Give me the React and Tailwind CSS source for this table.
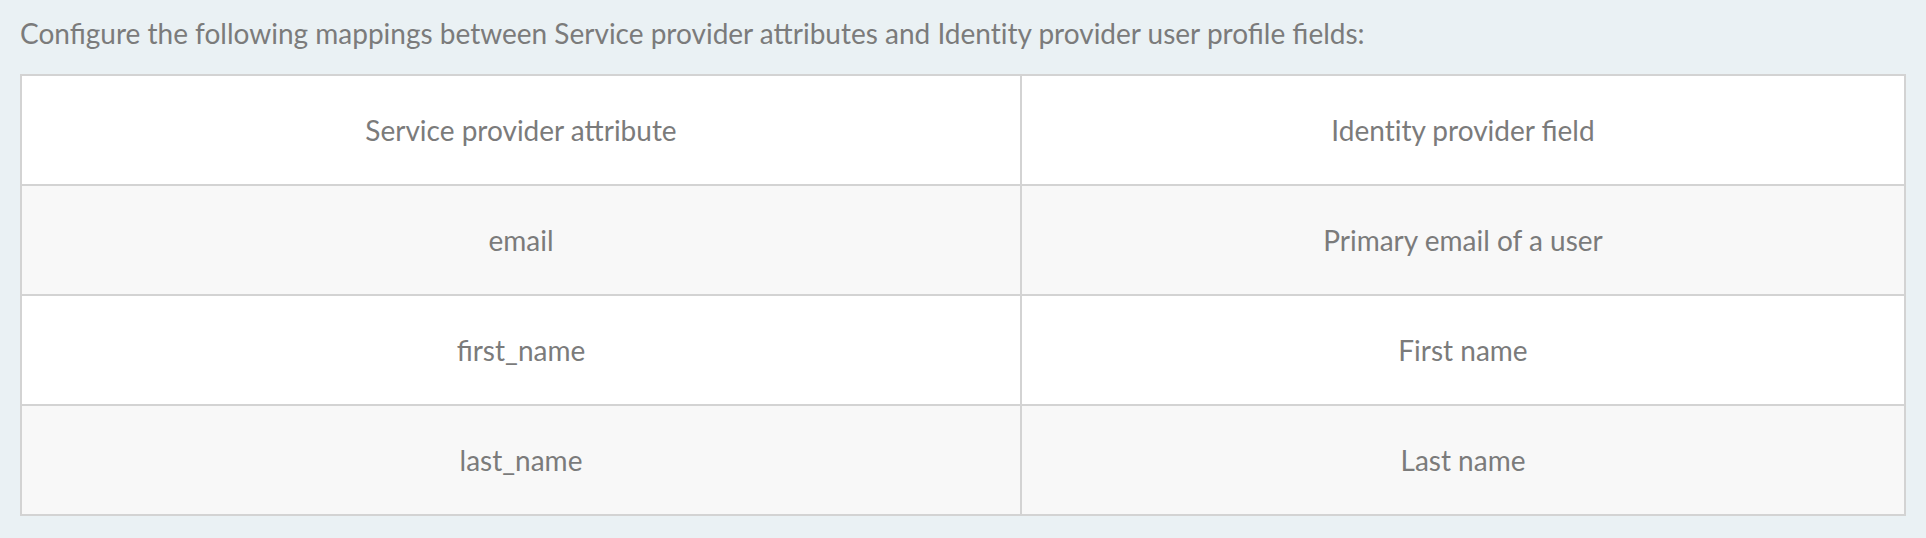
const ROWS = [
    { attr: 'email', field: 'Primary email of a user' },
    { attr: 'first_name', field: 'First name' },
    { attr: 'last_name', field: 'Last name' },
]

// zero-width non-joiner keeps Lato from joining "ti"
const IDENTITY = 'Ident\u200City'

export default function App() {
    return (
        <div className="w-[1926px] h-[538px] bg-[#eaf1f4] px-[20px] pt-[14px] font-['Lato','Open_Sans',sans-serif] text-[#7b7b7b]">
            <p className="text-[28px] leading-[38px] h-[60px]">
                Configure the following mappings between Service provider attributes and {IDENTITY} provider user profile fields:
            </p>

            {/* mapping table */}
            <div className="w-[1886px] border-2 border-[#d3d3d3] text-[28px]">
                <div className="grid grid-cols-[1000px_1fr] h-[110px] bg-white border-b-2 border-[#d3d3d3]">
                    <div className="flex items-center justify-center border-r-2 border-[#d3d3d3]">Service provider attribute</div>
                    <div className="flex items-center justify-center">{IDENTITY} provider field</div>
                </div>
                {ROWS.map((r, i) => (
                    <div
                        key={r.attr}
                        className={`grid grid-cols-[1000px_1fr] ${i % 2 === 0 ? 'bg-[#f8f8f8]' : 'bg-white'} ${i < ROWS.length - 1 ? 'h-[110px] border-b-2 border-[#d3d3d3]' : 'h-[108px]'}`}
                    >
                        <div className="flex items-center justify-center border-r-2 border-[#d3d3d3]">{r.attr}</div>
                        <div className="flex items-center justify-center">{r.field}</div>
                    </div>
                ))}
            </div>
        </div>
    )
}
